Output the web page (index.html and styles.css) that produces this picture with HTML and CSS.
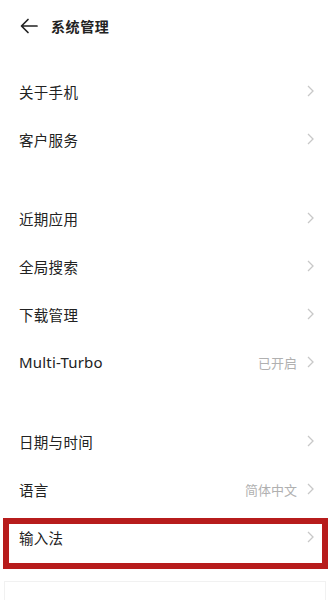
FILE: index.html
```html
<!DOCTYPE html>
<html lang="zh-CN">
<head>
    <meta charset="UTF-8">
    <meta name="viewport" content="width=device-width, initial-scale=1.0">
    <title>系统管理</title>
    <link rel="stylesheet" href="styles.css">
</head>
<body>
    <div class="page">
        <div class="header">
            <svg class="back" width="18" height="16" viewBox="0 0 18 16">
                <path d="M17 8 H2 M8 1.5 L1.5 8 L8 14.5" fill="none" stroke="#222" stroke-width="1.7" stroke-linecap="round" stroke-linejoin="round"/>
            </svg>
            <div class="title">系统管理</div>
        </div>

        <div class="group first">
            <div class="row"><span class="label">关于手机</span><span class="right"><svg class="chev" width="7" height="12" viewBox="0 0 7 12"><path d="M1 1 L6 6 L1 11" fill="none" stroke="#c8c8c8" stroke-width="1.3"/></svg></span></div>
            <div class="row"><span class="label">客户服务</span><span class="right"><svg class="chev" width="7" height="12" viewBox="0 0 7 12"><path d="M1 1 L6 6 L1 11" fill="none" stroke="#c8c8c8" stroke-width="1.3"/></svg></span></div>
        </div>

        <div class="group">
            <div class="row"><span class="label">近期应用</span><span class="right"><svg class="chev" width="7" height="12" viewBox="0 0 7 12"><path d="M1 1 L6 6 L1 11" fill="none" stroke="#c8c8c8" stroke-width="1.3"/></svg></span></div>
            <div class="row"><span class="label">全局搜索</span><span class="right"><svg class="chev" width="7" height="12" viewBox="0 0 7 12"><path d="M1 1 L6 6 L1 11" fill="none" stroke="#c8c8c8" stroke-width="1.3"/></svg></span></div>
            <div class="row"><span class="label">下载管理</span><span class="right"><svg class="chev" width="7" height="12" viewBox="0 0 7 12"><path d="M1 1 L6 6 L1 11" fill="none" stroke="#c8c8c8" stroke-width="1.3"/></svg></span></div>
            <div class="row"><span class="label latin">Multi-Turbo</span><span class="right"><span class="value">已开启</span><svg class="chev" width="7" height="12" viewBox="0 0 7 12"><path d="M1 1 L6 6 L1 11" fill="none" stroke="#c8c8c8" stroke-width="1.3"/></svg></span></div>
        </div>

        <div class="group">
            <div class="row"><span class="label">日期与时间</span><span class="right"><svg class="chev" width="7" height="12" viewBox="0 0 7 12"><path d="M1 1 L6 6 L1 11" fill="none" stroke="#c8c8c8" stroke-width="1.3"/></svg></span></div>
            <div class="row"><span class="label">语言</span><span class="right"><span class="value">简体中文</span><svg class="chev" width="7" height="12" viewBox="0 0 7 12"><path d="M1 1 L6 6 L1 11" fill="none" stroke="#c8c8c8" stroke-width="1.3"/></svg></span></div>
            <div class="row marked"><span class="label">输入法</span><span class="right"><svg class="chev" width="7" height="12" viewBox="0 0 7 12"><path d="M1 1 L6 6 L1 11" fill="none" stroke="#c8c8c8" stroke-width="1.3"/></svg></span></div>
        </div>

        <div class="more"></div>
    </div>
</body>
</html>
```

FILE: styles.css
```css
* {
    margin: 0;
    padding: 0;
    box-sizing: border-box;
}

body {
    background: #ffffff;
    font-family: "Noto Sans", "Noto Sans CJK SC", sans-serif;
    color: #222222;
    overflow: hidden;
}

.page {
    width: 334px;
    height: 600px;
    overflow: hidden;
}

.header {
    height: 52px;
    display: flex;
    align-items: center;
    padding-left: 20px;
}

.back {
    display: block;
    margin-right: 13px;
}

.title {
    font-size: 14px;
    font-weight: 700;
    letter-spacing: 0.6px;
    color: #222;
}

.group {
    margin-top: 31px;
}

.group.first {
    margin-top: 15px;
}

.row {
    height: 48px;
    display: flex;
    align-items: center;
    justify-content: space-between;
    padding: 0 20px 0 19px;
    position: relative;
}

.label {
    font-size: 14.5px;
    color: #222;
    letter-spacing: 0.3px;
}

.label.latin {
    font-size: 15px;
    letter-spacing: 0.2px;
}

.right {
    display: flex;
    align-items: center;
}

.value {
    font-size: 13px;
    color: #b0b0b0;
    margin-right: 10px;
}

.chev {
    display: block;
}

.marked::after {
    content: "";
    position: absolute;
    top: 5px;
    bottom: -8px;
    left: 3px;
    right: 6px;
    border: 6px solid #b71c1c;
}

.more {
    margin: 20px 8px 0 4px;
    height: 40px;
    border: 1px solid #f1f1f1;
}
```
